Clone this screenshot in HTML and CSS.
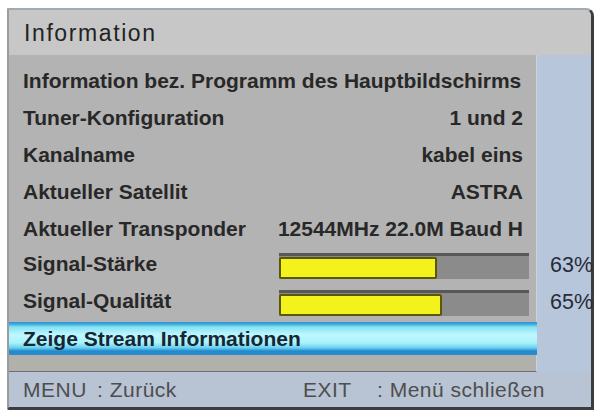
FILE: index.html
```html
<!DOCTYPE html>
<html lang="de">
<head>
<meta charset="utf-8">
<title>Information</title>
<link rel="stylesheet" href="styles.css">
</head>
<body>
<div class="screen">
  <div class="titlebar">Information</div>
  <div class="area">
    <div class="rows">
      <div class="row"><div class="cell">Information bez. Programm des Hauptbildschirms</div></div>
      <div class="row"><div class="cell"><span>Tuner-Konfiguration</span><span>1 und 2</span></div></div>
      <div class="row"><div class="cell"><span>Kanalname</span><span>kabel eins</span></div></div>
      <div class="row"><div class="cell"><span>Aktueller Satellit</span><span>ASTRA</span></div></div>
      <div class="row"><div class="cell"><span>Aktueller Transponder</span><span>12544MHz 22.0M Baud H</span></div></div>
      <div class="row">
        <div class="cell">
          <span class="label">Signal-Stärke</span>
          <div class="track"><div class="fill" style="width:63%"></div></div>
        </div>
        <div class="pct">63%</div>
      </div>
      <div class="row">
        <div class="cell">
          <span class="label">Signal-Qualität</span>
          <div class="track"><div class="fill" style="width:65%"></div></div>
        </div>
        <div class="pct">65%</div>
      </div>
      <div class="row hl"><div class="cell">Zeige Stream Informationen</div></div>
      <div class="panel-end"></div>
    </div>
    <div class="footer">
      <div class="fgroup"><span class="key">MENU</span><span>: Zurück</span></div>
      <div class="fgroup"><span class="key">EXIT</span><span>: Menü schließen</span></div>
    </div>
  </div>
</div>
</body>
</html>
```

FILE: styles.css
```css
html, body {
  margin: 0;
  padding: 0;
  background: #ffffff;
}

body {
  font-family: "Liberation Sans", Arial, sans-serif;
  color: #2a2a2a;
}

.screen {
  margin: 8px 0 0 7px;
  width: 587px;
  height: 402px;
  box-sizing: border-box;
  border-left: 2px solid #9c9c9c;
  border-top: 2px solid #a2aab2;
  border-right: 3px solid #3a3c3e;
  border-bottom: 3px solid #3a3c3e;
  border-top-right-radius: 8px;
  border-bottom-left-radius: 2px;
  overflow: visible;
  background: #b7c6da;
  display: flex;
  flex-direction: column;
}

.titlebar {
  height: 45px;
  flex: none;
  background: #c7c7c7;
  border-top-right-radius: 6px;
  display: flex;
  align-items: center;
  padding-left: 15px;
  padding-top: 1px;
  box-sizing: border-box;
  font-size: 23px;
  letter-spacing: 1.6px;
  color: #232323;
}

.area {
  flex: 1;
  display: flex;
  flex-direction: column;
  background: #b7c6da;
}

.rows {
  padding-top: 7px;
  background: linear-gradient(to right, #b3b3b3 0, #b3b3b3 527px, #cdd2d8 527px, #cdd2d8 528px, transparent 528px);
}

.row {
  display: flex;
  align-items: center;
  height: 37px;
}

.cell {
  width: 528px;
  height: 100%;
  box-sizing: border-box;
  padding: 0 14px;
  display: flex;
  align-items: center;
  justify-content: space-between;
  font-size: 21px;
  font-weight: bold;
  color: #282828;
  white-space: nowrap;
}

.label {
  width: 256px;
  flex: none;
  align-self: center;
  margin-top: -4px;
}

.track {
  width: 250px;
  height: 26px;
  box-sizing: border-box;
  margin-right: -6px;
  background: #8b8b8b;
  border-top: 3px solid #575757;
  display: flex;
  align-items: stretch;
  padding: 1px 0 0 0;
}

.fill {
  height: 100%;
  box-sizing: border-box;
  background: #f3f21d;
  border: 2px solid #5b5608;
  border-radius: 2px;
}

.pct {
  padding-left: 13px;
  font-size: 21.5px;
  color: #262c3a;
  white-space: nowrap;
}

.row.hl {
  height: 33px;
  margin-top: 1px;
}

.row.hl .cell {
  color: #162636;
  background: linear-gradient(to bottom,
    #2c94d4 0px,
    #3aa6dc 2px,
    #86e2f2 5px,
    #bff8ff 13px,
    #a8f2fa 21px,
    #66cdee 26px,
    #2289cc 29px,
    #2a8dce 33px);
}

.panel-end {
  width: 528px;
  height: 17px;
  box-sizing: border-box;
  background: #b2b0ab;
  border-bottom: 1px solid #6c7076;
  border-right: 1px solid #cdd2d8;
}

.footer {
  flex: 1;
  display: flex;
  align-items: center;
  padding-left: 14px;
  font-size: 21px;
  letter-spacing: 0.5px;
  color: #4e4e4e;
  white-space: nowrap;
  background: #b8c3d3;
}

.fgroup {
  display: flex;
  width: 280px;
}

.key {
  width: 74px;
  flex: none;
}
```
